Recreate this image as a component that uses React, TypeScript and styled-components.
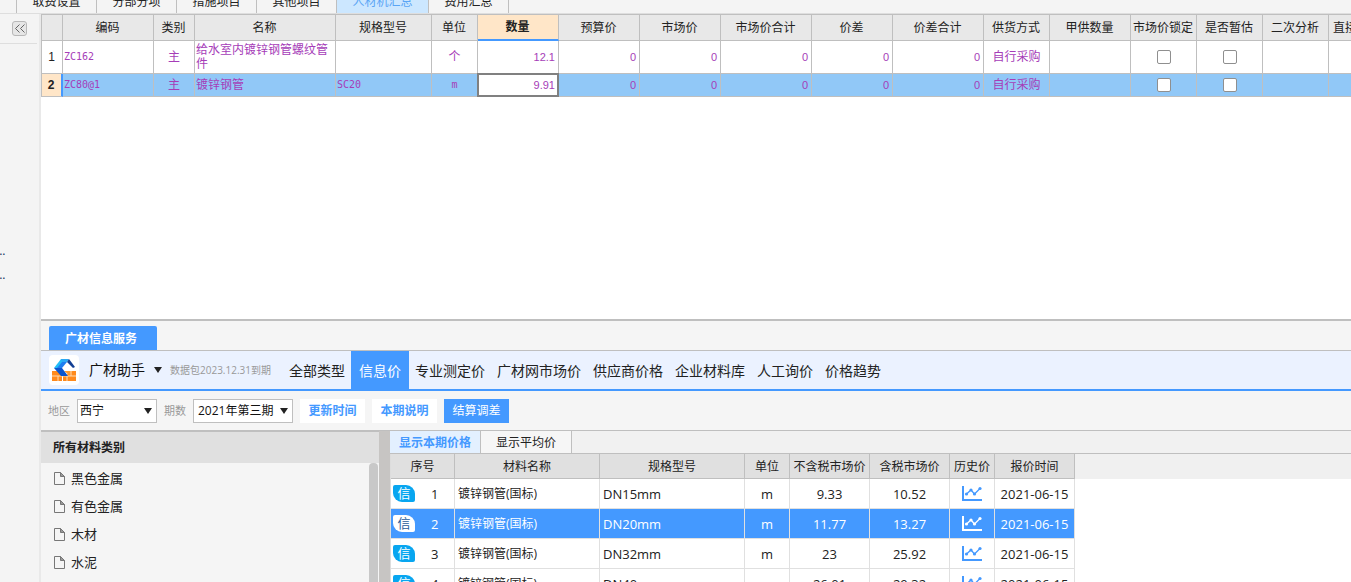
import React from 'react';
import styled, { createGlobalStyle, css } from 'styled-components';

const blue = '#4499ff';
const line = '#bfbfbf';
const purple = '#a63db8';

const GlobalStyle = createGlobalStyle`
  * { box-sizing: border-box; }
  body {
    margin: 0;
    background: #f4f4f4;
    color: #222;
    font: 12px/16px 'Open Sans', 'Noto Sans CJK SC', sans-serif;
  }
  button, select, input { font: inherit; color: inherit; margin: 0; }
  button { border: 0; padding: 0; background: none; cursor: pointer; white-space: nowrap; }
`;

const Page = styled.div`
  display: flex;
  flex-direction: column;
  height: 100vh;
  overflow: hidden;
`;

const TopTabs = styled.nav`
  display: flex;
  align-items: flex-end;
  flex: none;
  height: 14px;
  padding-left: 16px;
  overflow: hidden;
  border-bottom: 1px solid #dedede;
  font-family: 'Liberation Sans', 'Noto Sans CJK SC', sans-serif;
`;

const TopTab = styled.button<{ $active?: boolean }>`
  flex: none;
  width: ${(p) => (p.$active ? 92 : 80)}px;
  height: 22px;
  line-height: 22px;
  border-left: 1px solid ${line};
  background: ${(p) => (p.$active ? '#cce7ff' : '#f4f4f4')};
  color: ${(p) => (p.$active ? '#5aa5f5' : '#222')};
  &:last-child { width: 81px; border-right: 1px solid ${line}; }
`;

const Body = styled.div`
  display: flex;
  flex: 1;
  min-height: 0;
`;

const Rail = styled.aside`
  display: flex;
  flex-direction: column;
  flex: none;
  width: 41px;
  border-right: 2px solid #e9e9e9;
`;

const RailHead = styled.div`
  height: 30px;
  margin-right: 2px;
  padding: 7px 0 0 12px;
  border-bottom: 1px solid #dedede;
`;

const CollapseButton = styled.button`
  display: flex;
  align-items: center;
  justify-content: center;
  width: 15px;
  height: 15px;
  border: 1px solid #b8b8b8;
  border-radius: 3px;
  background: #e6e6e6;
  color: #666;
`;

const RailNodes = styled.ul`
  list-style: none;
  margin: 0;
  padding: 195px 0 0;
  overflow: hidden;
  color: #13325c;
  li { height: 24px; line-height: 24px; text-indent: -4px; }
`;

const Main = styled.main`
  display: flex;
  flex-direction: column;
  flex: 1;
  min-width: 0;
`;

const GridPane = styled.section`
  flex: 1;
  min-height: 0;
  overflow: hidden;
  background: #fff;
`;

const Grid = styled.table`
  table-layout: fixed;
  width: 1370px;
  border-collapse: separate;
  border-spacing: 0;
  border-top: 1px solid ${line};
  border-left: 1px solid ${line};
  font-family: 'Liberation Sans', 'Noto Sans CJK SC', sans-serif;
  line-height: 14px;
`;

const GridHead = styled.th<{ $current?: boolean }>`
  height: 26px;
  padding: 0 1px 0 0;
  border-right: 1px solid ${line};
  border-bottom: 1px solid ${line};
  background: #e8e8e8;
  font-weight: 400;
  white-space: nowrap;
  ${(p) => p.$current && css`
    background: #ffe6c8;
    border-bottom: 2px solid ${blue};
    font-weight: 700;
  `}
`;

const GridRow = styled.tr<{ $selected?: boolean }>`
  height: ${(p) => (p.$selected ? 23 : 33)}px;
  background: ${(p) => (p.$selected ? '#91c8f7' : '#fff')};
`;

const RowNumber = styled.th<{ $selected?: boolean }>`
  padding: 0 1px 0 0;
  border-right: 1px solid ${line};
  border-bottom: 1px solid ${line};
  font-weight: 400;
  ${(p) => p.$selected && css`
    background: #ffe6c8;
    border-right: 2px solid ${blue};
    font-weight: 700;
  `}
`;

const GridCell = styled.td<{ $align?: string; $kind?: 'code' | 'number'; $editing?: boolean }>`
  position: relative;
  padding: ${(p) => (p.$align === 'center' ? '0 1px' : '0 3px 0 1px')};
  border-right: 1px solid ${line};
  border-bottom: 1px solid ${line};
  color: ${purple};
  text-align: ${(p) => p.$align || 'left'};
  ${(p) => p.$kind === 'code' && css`
    font-family: 'DejaVu Sans Mono', monospace;
    font-size: 10px;
  `}
  ${(p) => p.$kind === 'number' && css`
    font-size: 11px;
  `}
  ${(p) => p.$editing && css`
    background: #fff;
    &::after {
      content: '';
      position: absolute;
      inset: -1px;
      border: 2px solid #808080;
    }
  `}
`;

const Check = styled.input`
  appearance: none;
  display: block;
  width: 14px;
  height: 14px;
  margin: 0 auto;
  border: 1px solid #8f8f8f;
  border-radius: 2px;
  background: #fff;
`;

const Dock = styled.section`
  display: flex;
  flex-direction: column;
  flex: 0 0 263px;
  min-height: 0;
  overflow: hidden;
  border-top: 2px solid ${line};
  background: #f5f5f5;
`;

const DockTabs = styled.div`
  display: flex;
  align-items: flex-end;
  flex: none;
  height: 30px;
  padding-left: 8px;
  border-bottom: 1px solid ${line};
`;

const DockTab = styled.button`
  width: 108px;
  height: 24px;
  padding: 1px 0 0 16px;
  border-radius: 2px 2px 0 0;
  background: ${blue};
  color: #fff;
  font-weight: 700;
  text-align: left;
`;

const ServiceBar = styled.header`
  display: flex;
  align-items: center;
  flex: none;
  height: 40px;
  padding-left: 8px;
  background: #ebf2ff;
  border-bottom: 2px solid ${blue};
`;

const Logo = styled.svg`
  flex: none;
  width: 30px;
  height: 30px;
`;

const BrandButton = styled.button`
  display: flex;
  align-items: center;
  gap: 9px;
  margin-left: 10px;
  font-size: 14px;
  line-height: 20px;
  color: #111;
`;

const Expiry = styled.span`
  width: 113px;
  margin-left: 8px;
  font-size: 10px;
  color: #999;
  white-space: nowrap;
`;

const ServiceNav = styled.nav`
  display: flex;
  align-self: stretch;
`;

const ServiceLink = styled.a<{ $active?: boolean }>`
  padding: 0 ${(p) => (p.$active ? 8 : 6)}px;
  background: ${(p) => (p.$active ? blue : 'transparent')};
  color: ${(p) => (p.$active ? '#fff' : '#222')};
  font-size: 14px;
  line-height: 40px;
  text-decoration: none;
  white-space: nowrap;
`;

const FilterBar = styled.form`
  display: flex;
  align-items: center;
  gap: 7px;
  flex: none;
  height: 39px;
  padding-left: 7px;
`;

const FilterLabel = styled.label`
  font-size: 11px;
  color: #999;
`;

const SelectBox = styled.div<{ $width: number }>`
  position: relative;
  width: ${(p) => p.$width}px;
  svg {
    position: absolute;
    right: 5px;
    top: 9px;
    pointer-events: none;
  }
`;

const Select = styled.select<{ $inset: number }>`
  appearance: none;
  display: block;
  width: 100%;
  height: 24px;
  padding: 0 0 0 ${(p) => p.$inset}px;
  border: 1px solid ${line};
  border-radius: 0;
  background: #fff;
  color: #111;
`;

const FilterButton = styled.button<{ $primary?: boolean }>`
  width: 65px;
  height: 24px;
  background: ${(p) => (p.$primary ? blue : '#fff')};
  color: ${(p) => (p.$primary ? '#fff' : blue)};
  font-weight: ${(p) => (p.$primary ? 400 : 700)};
`;

const Split = styled.div`
  display: flex;
  flex: 1;
  min-height: 0;
  border-top: 1px solid ${line};
`;

const Categories = styled.aside`
  flex: none;
  width: 338px;
  overflow: hidden;
  border-top: 1px solid ${line};
`;

const CategoryHead = styled.h2`
  margin: 0;
  height: 31px;
  padding-left: 12px;
  background: #e0e0e0;
  font-size: 12px;
  line-height: 31px;
`;

const CategoryBody = styled.div`
  display: flex;
  justify-content: space-between;
  height: 100%;
`;

const CategoryList = styled.ul`
  list-style: none;
  margin: 0;
  padding: 1px 0 0 13px;
`;

const Category = styled.li`
  display: flex;
  align-items: center;
  gap: 6px;
  height: 28px;
  font-size: 13px;
`;

const ScrollThumb = styled.div`
  width: 9px;
  margin-right: 1px;
  border-radius: 4px 4px 0 0;
  background: #c8c8c8;
`;

const Splitter = styled.div`
  flex: none;
  width: 11px;
  background: #c7c5c3;
`;

const Prices = styled.section`
  flex: 1;
  min-width: 0;
  overflow: hidden;
  background: #fff;
`;

const PriceTabs = styled.div`
  display: flex;
  height: 23px;
  background: #f1f1f1;
  border-bottom: 1px solid ${line};
`;

const PriceTab = styled.button<{ $active?: boolean }>`
  width: 91px;
  padding-top: 2px;
  border-right: 1px solid ${line};
  background: ${(p) => (p.$active ? '#e3f0ff' : '#f6f6f6')};
  color: ${(p) => (p.$active ? blue : '#222')};
  font-weight: ${(p) => (p.$active ? 700 : 400)};
`;

const PriceHeadStrip = styled.div`
  background: linear-gradient(#f0f0f0, #f0f0f0) 0 0 / 100% 25px no-repeat;
`;

const PriceTable = styled.table`
  table-layout: fixed;
  width: 685px;
  border-collapse: separate;
  border-spacing: 0;
  border-left: 1px solid #ddd;
`;

const PriceHead = styled.th`
  height: 25px;
  padding: 1px 0 0;
  border-right: 1px solid ${line};
  border-bottom: 1px solid ${line};
  background: #e0e0e0;
  font-weight: 400;
  white-space: nowrap;
`;

const PriceRow = styled.tr<{ $selected?: boolean }>`
  height: 30px;
  background: ${(p) => (p.$selected ? blue : '#fff')};
  color: ${(p) => (p.$selected ? '#fff' : '#222')};
`;

const PriceCell = styled.td<{ $left?: boolean; $latin?: boolean }>`
  padding: 0 3px;
  border-right: 1px solid #e0e0e0;
  border-bottom: 1px solid #e0e0e0;
  font-size: ${(p) => (p.$latin ? 13 : 12)}px;
  text-align: ${(p) => (p.$left ? 'left' : 'center')};
  white-space: nowrap;
`;

const IndexContent = styled.div`
  display: flex;
  align-items: center;
  gap: 16px;
`;

const SourceBadge = styled.span<{ $selected?: boolean }>`
  width: 22px;
  height: 17px;
  margin-left: -1px;
  border-radius: 2px 9px 2px 9px;
  background: ${(p) => (p.$selected ? '#fff' : '#08a6f0')};
  color: ${(p) => (p.$selected ? '#1f5c99' : '#fff')};
  line-height: 17px;
  text-align: center;
`;

const HistoryButton = styled.button<{ $selected?: boolean }>`
  display: block;
  margin: 0 auto;
  color: ${(p) => (p.$selected ? '#fff' : blue)};
  svg { display: block; }
`;

const Arrow = () => (
  <svg width="8" height="6" viewBox="0 0 8 6" aria-hidden="true">
    <path d="M0 0h8L4 6z" fill="#222" />
  </svg>
);

const FileIcon = () => (
  <svg width="11" height="13" viewBox="0 0 11 13" aria-hidden="true">
    <path d="M.5.5h6l4 4v8H.5z" fill="none" stroke="#777" />
    <path d="M6.5.5v4h4z" fill="#999" stroke="#777" />
  </svg>
);

const ChartIcon = () => (
  <svg width="20" height="15" viewBox="0 0 20 15" aria-hidden="true">
    <path d="M1 0v14h19" fill="none" stroke="currentColor" strokeWidth="2" />
    <path d="M4.5 8L9 4l3.5 4L18 2.5" fill="none" stroke="currentColor" strokeWidth="1.3" />
    <g fill="currentColor">
      <circle cx="4.5" cy="8" r="1.6" />
      <circle cx="9" cy="4" r="1.6" />
      <circle cx="12.5" cy="8" r="1.6" />
      <circle cx="18" cy="2.5" r="1.6" />
    </g>
  </svg>
);

const BrandLogo = () => (
  <Logo viewBox="0 0 30 30" aria-hidden="true">
    <rect width="30" height="30" rx="4" fill="#fff" />
    <path d="M3 16h6l5 5h-1v5H3zM17 21l4-5h6v10H14v-5z" fill="#ff8a1c" />
    <path d="M15 16h9l-4 4z" fill="#ff9a2e" />
    <path d="M3 21h24M9 21v5M18 21v5M22 16v5" stroke="#ffd9ae" />
    <path d="M5 13l7-9h4l-5 9z" fill="#22bdf7" />
    <path d="M12 4h8l-2 3h-5z" fill="#2aa8f5" />
    <path d="M13 7h5l-5 6h-5z" fill="#1d7df0" />
    <path d="M5 13h8l6 8h-7z" fill="#0b55cf" />
    <path d="M20 4l6 8-2 1-6-6z" fill="#123f94" />
  </Logo>
);

const topTabs = ['取费设置', '分部分项', '措施项目', '其他项目', '人材机汇总', '费用汇总'];

const gridColumns: [string, number][] = [
  ['', 21], ['编码', 91], ['类别', 41], ['名称', 141], ['规格型号', 96], ['单位', 46],
  ['数量', 81], ['预算价', 81], ['市场价', 81], ['市场价合计', 91], ['价差', 81],
  ['价差合计', 91], ['供货方式', 66], ['甲供数量', 81], ['市场价锁定', 66],
  ['是否暂估', 66], ['二次分析', 66], ['直接修改单价', 82],
];

const gridRows = [
  { code: 'ZC162', name: '给水室内镀锌钢管螺纹管件', spec: '', unit: '个', amount: '12.1' },
  { code: 'ZC80@1', name: '镀锌钢管', spec: 'SC20', unit: 'm', amount: '9.91', selected: true },
];

const services = ['全部类型', '信息价', '专业测定价', '广材网市场价', '供应商价格', '企业材料库', '人工询价', '价格趋势'];

const categories = ['黑色金属', '有色金属', '木材', '水泥'];

const priceColumns: [string, number][] = [
  ['序号', 64], ['材料名称', 145], ['规格型号', 145], ['单位', 45],
  ['不含税市场价', 80], ['含税市场价', 80], ['历史价', 45], ['报价时间', 80],
];

const priceRows = [
  ['DN15mm', '9.33', '10.52'],
  ['DN20mm', '11.77', '13.27'],
  ['DN32mm', '23', '25.92'],
  ['DN40mm', '26.01', '29.32'],
];

export default function App() {
  return (
    <Page>
      <GlobalStyle />
      <TopTabs>
        {topTabs.map((t) => (
          <TopTab key={t} $active={t === '人材机汇总'}>{t}</TopTab>
        ))}
      </TopTabs>
      <Body>
        <Rail>
          <RailHead>
            <CollapseButton aria-label="收起">
              <svg width="10" height="9" viewBox="0 0 10 9" aria-hidden="true">
                <path d="M4.5 .5l-4 4 4 4M9.5 .5l-4 4 4 4" fill="none" stroke="currentColor" />
              </svg>
            </CollapseButton>
          </RailHead>
          <RailNodes>
            <li>...</li>
            <li>...</li>
          </RailNodes>
        </Rail>
        <Main>
          <GridPane>
            <Grid>
              <colgroup>
                {gridColumns.map(([t, w]) => <col key={t} width={w} />)}
              </colgroup>
              <thead>
                <tr>
                  {gridColumns.map(([t]) => (
                    <GridHead key={t} $current={t === '数量'}>{t}</GridHead>
                  ))}
                </tr>
              </thead>
              <tbody>
                {gridRows.map((r, i) => (
                  <GridRow key={r.code} $selected={r.selected}>
                    <RowNumber $selected={r.selected}>{i + 1}</RowNumber>
                    <GridCell $kind="code">{r.code}</GridCell>
                    <GridCell $align="center">主</GridCell>
                    <GridCell>{r.name}</GridCell>
                    <GridCell $kind="code">{r.spec}</GridCell>
                    <GridCell $align="center" $kind={r.unit === 'm' ? 'code' : undefined}>{r.unit}</GridCell>
                    <GridCell $align="right" $kind="number" $editing={r.selected}>{r.amount}</GridCell>
                    {['预算价', '市场价', '市场价合计', '价差', '价差合计'].map((k) => (
                      <GridCell key={k} $align="right" $kind="number">0</GridCell>
                    ))}
                    <GridCell $align="center">自行采购</GridCell>
                    <GridCell />
                    <GridCell $align="center"><Check type="checkbox" aria-label="市场价锁定" /></GridCell>
                    <GridCell $align="center"><Check type="checkbox" aria-label="是否暂估" /></GridCell>
                    <GridCell />
                    <GridCell />
                  </GridRow>
                ))}
              </tbody>
            </Grid>
          </GridPane>
          <Dock>
            <DockTabs><DockTab>广材信息服务</DockTab></DockTabs>
            <ServiceBar>
              <BrandLogo />
              <BrandButton>广材助手<Arrow /></BrandButton>
              <Expiry>数据包2023.12.31到期</Expiry>
              <ServiceNav>
                {services.map((s) => (
                  <ServiceLink key={s} href="#" $active={s === '信息价'}>{s}</ServiceLink>
                ))}
              </ServiceNav>
            </ServiceBar>
            <FilterBar onSubmit={(e) => e.preventDefault()}>
              <FilterLabel htmlFor="region">地区</FilterLabel>
              <SelectBox $width={80}>
                <Select id="region" $inset={2}><option>西宁</option></Select>
                <Arrow />
              </SelectBox>
              <FilterLabel htmlFor="period">期数</FilterLabel>
              <SelectBox $width={100}>
                <Select id="period" $inset={4}><option>2021年第三期</option></Select>
                <Arrow />
              </SelectBox>
              <FilterButton>更新时间</FilterButton>
              <FilterButton>本期说明</FilterButton>
              <FilterButton $primary>结算调差</FilterButton>
            </FilterBar>
            <Split>
              <Categories>
                <CategoryHead>所有材料类别</CategoryHead>
                <CategoryBody>
                  <CategoryList>
                    {categories.map((c) => <Category key={c}><FileIcon />{c}</Category>)}
                  </CategoryList>
                  <ScrollThumb />
                </CategoryBody>
              </Categories>
              <Splitter />
              <Prices>
                <PriceTabs>
                  <PriceTab $active>显示本期价格</PriceTab>
                  <PriceTab>显示平均价</PriceTab>
                </PriceTabs>
                <PriceHeadStrip>
                  <PriceTable>
                    <colgroup>
                      {priceColumns.map(([t, w]) => <col key={t} width={w} />)}
                    </colgroup>
                    <thead>
                      <tr>{priceColumns.map(([t]) => <PriceHead key={t}>{t}</PriceHead>)}</tr>
                    </thead>
                    <tbody>
                      {priceRows.map(([spec, net, gross], i) => (
                        <PriceRow key={spec} $selected={i === 1}>
                          <PriceCell $latin $left>
                            <IndexContent>
                              <SourceBadge $selected={i === 1}>信</SourceBadge>
                              {i + 1}
                            </IndexContent>
                          </PriceCell>
                          <PriceCell $left>镀锌钢管(国标)</PriceCell>
                          <PriceCell $left $latin>{spec}</PriceCell>
                          <PriceCell $latin>m</PriceCell>
                          <PriceCell $latin>{net}</PriceCell>
                          <PriceCell $latin>{gross}</PriceCell>
                          <PriceCell>
                            <HistoryButton $selected={i === 1} aria-label="历史价"><ChartIcon /></HistoryButton>
                          </PriceCell>
                          <PriceCell $latin>2021-06-15</PriceCell>
                        </PriceRow>
                      ))}
                    </tbody>
                  </PriceTable>
                </PriceHeadStrip>
              </Prices>
            </Split>
          </Dock>
        </Main>
      </Body>
    </Page>
  );
}
